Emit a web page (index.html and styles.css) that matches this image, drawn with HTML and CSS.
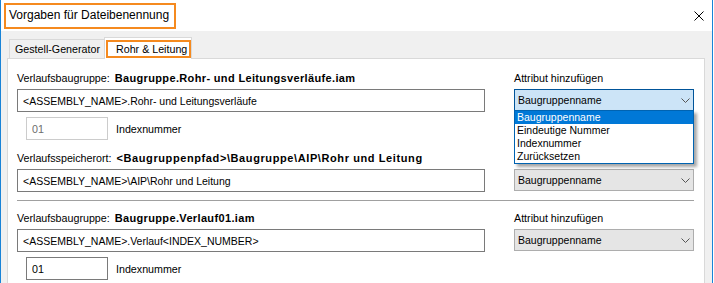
FILE: index.html
```html
<!DOCTYPE html>
<html lang="de">
<head>
  <meta charset="utf-8" />
  <title>Vorgaben für Dateibenennung</title>
  <link rel="stylesheet" href="styles.css">
</head>
<body>
  <div class="window">
    <div class="titlebar">
      <span class="title">Vorgaben für Dateibenennung</span>
      <svg class="close" width="10" height="10" viewBox="0 0 10 10">
        <path d="M0.5 0.5L9.5 9.5M9.5 0.5L0.5 9.5" stroke="#000" stroke-width="1" fill="none" />
      </svg>
    </div>

    <div class="dialog">
      <div class="tabs">
        <div class="tab">Gestell-Generator</div>
        <div class="tab active"><span class="hl">Rohr &amp; Leitung</span></div>
      </div>

      <div class="panel">
        <!-- Verlaufsbaugruppe -->
        <div class="row label-row">
          <div class="left">Verlaufsbaugruppe:<b class="val">Baugruppe.Rohr- und Leitungsverläufe.iam</b></div>
          <div class="right">Attribut hinzufügen</div>
        </div>
        <div class="row">
          <input class="left field" type="text" value="&lt;ASSEMBLY_NAME&gt;.Rohr- und Leitungsverläufe">
          <div class="right combo focus">
            <span>Baugruppenname</span>
            <svg class="chevron" width="9" height="5" viewBox="0 0 9 5">
              <polyline points="0.5,0.5 4.5,4.5 8.5,0.5" fill="none" stroke="#555" stroke-width="1" />
            </svg>
            <ul class="list">
              <li class="sel">Baugruppenname</li>
              <li>Eindeutige Nummer</li>
              <li>Indexnummer</li>
              <li>Zurücksetzen</li>
            </ul>
          </div>
        </div>
        <div class="index-row">
          <input class="num" type="text" value="01" disabled>
          <span>Indexnummer</span>
        </div>

        <!-- Verlaufsspeicherort -->
        <div class="row label-row second">
          <div class="left">Verlaufsspeicherort:<b class="val path">&lt;Baugruppenpfad&gt;\Baugruppe\AIP\Rohr und Leitung</b></div>
        </div>
        <div class="row">
          <input class="left field" type="text" value="&lt;ASSEMBLY_NAME&gt;\AIP\Rohr und Leitung">
          <div class="right combo">
            <span>Baugruppenname</span>
            <svg class="chevron" width="9" height="5" viewBox="0 0 9 5">
              <polyline points="0.5,0.5 4.5,4.5 8.5,0.5" fill="none" stroke="#555" stroke-width="1" />
            </svg>
          </div>
        </div>

        <div class="sep"></div>

        <!-- Verlauf mit Indexnummer -->
        <div class="row label-row">
          <div class="left">Verlaufsbaugruppe:<b class="val">Baugruppe.Verlauf01.iam</b></div>
          <div class="right">Attribut hinzufügen</div>
        </div>
        <div class="row">
          <input class="left field" type="text" value="&lt;ASSEMBLY_NAME&gt;.Verlauf&lt;INDEX_NUMBER&gt;">
          <div class="right combo">
            <span>Baugruppenname</span>
            <svg class="chevron" width="9" height="5" viewBox="0 0 9 5">
              <polyline points="0.5,0.5 4.5,4.5 8.5,0.5" fill="none" stroke="#555" stroke-width="1" />
            </svg>
          </div>
        </div>
        <div class="index-row">
          <input class="num" type="text" value="01">
          <span>Indexnummer</span>
        </div>
      </div>
    </div>
  </div>
</body>
</html>
```

FILE: styles.css
```css
* {
    margin: 0;
    padding: 0;
    box-sizing: border-box;
}

body {
    background-color: #ffffff;
    font-family: "Liberation Sans", Arial, sans-serif;
    font-size: 10.7px;
    color: #000000;
}

.window {
    width: 713px;
    height: 283px;
    overflow: hidden;
    background-color: #f0f0f0;
    border-left: 1px solid #1883d7;
    border-right: 1px solid #1883d7;
}

/* title bar */
.titlebar {
    height: 31px;
    display: flex;
    align-items: center;
    justify-content: space-between;
    padding: 0 8px 0 3px;
    background-color: #ffffff;
}

.title {
    height: 26px;
    padding: 1px 5px 0 3px;
    border: 2px solid #f58a1f;
    font-size: 12px;
    line-height: 18px;
}

/* tabs */
.dialog {
    padding: 6px 7px 0 6px;
}

.tabs {
    display: flex;
    align-items: flex-end;
    height: 22px;
    margin: 0 0 -1px 2px;
    position: relative;
}

.tab {
    width: 96px;
    height: 19px;
    margin-bottom: 1px;
    padding-left: 5px;
    border: 1px solid #d9d9d9;
    border-bottom: none;
    line-height: 18px;
}

.tab.active {
    width: 88px;
    height: 22px;
    margin: 0 0 0 -1px;
    padding: 1px 0 0 0;
    background-color: #ffffff;
}

.hl {
    display: block;
    height: 18px;
    margin: 1px 0 0 1px;
    padding-left: 8px;
    border: 2px solid #f58a1f;
    line-height: 14px;
}

/* panel content */
.panel {
    height: 240px;
    padding: 11px 9px 0 9px;
    background-color: #ffffff;
    border: 1px solid #d9d9d9;
}

.row {
    display: flex;
    align-items: flex-start;
    gap: 29px;
}

.left {
    width: 468px;
}

.right {
    width: 180px;
}

.label-row {
    line-height: 16px;
    margin-bottom: 3px;
}

.label-row.second {
    margin-top: 10px;
}

.val {
    margin-left: 5px;
    font-size: 11px;
    letter-spacing: 0.35px;
}

.val.path {
    letter-spacing: 0.6px;
}

.field {
    height: 23px;
    padding-left: 5px;
    border: 1px solid #7a7a7a;
    font-family: inherit;
    font-size: 10.5px;
    color: #000000;
    outline: none;
}

.index-row {
    display: flex;
    align-items: center;
    gap: 8px;
    height: 23px;
    margin-top: 5px;
    padding-left: 9px;
}

.num {
    width: 82px;
    height: 23px;
    padding-left: 5px;
    border: 1px solid #7a7a7a;
    font-family: inherit;
    font-size: 10.7px;
    color: #000000;
    background-color: #ffffff;
    outline: none;
}

.num:disabled {
    border-color: #cccccc;
    color: #6d6d6d;
}

/* combo boxes */
.combo {
    position: relative;
    height: 22px;
    display: flex;
    align-items: center;
    justify-content: space-between;
    padding: 0 3px 0 3px;
    font-size: 10.5px;
    background-color: #e5e5e5;
    border: 1px solid #adadad;
}

.combo.focus {
    background-color: #cce4f7;
    border-color: #005499;
}

.list {
    position: absolute;
    top: 20px;
    left: -1px;
    right: -1px;
    list-style: none;
    background-color: #ffffff;
    border: 1px solid #0063b1;
    box-shadow: 3px 3px 3px rgba(0, 0, 0, 0.35);
    z-index: 2;
}

.list li {
    height: 13px;
    line-height: 13px;
    padding-left: 2px;
}

.list .sel {
    background-color: #0078d7;
    color: #ffffff;
}

.sep {
    width: 677px;
    height: 1px;
    margin: 8px 0 9px 0;
    background-color: #a0a0a0;
}
```
